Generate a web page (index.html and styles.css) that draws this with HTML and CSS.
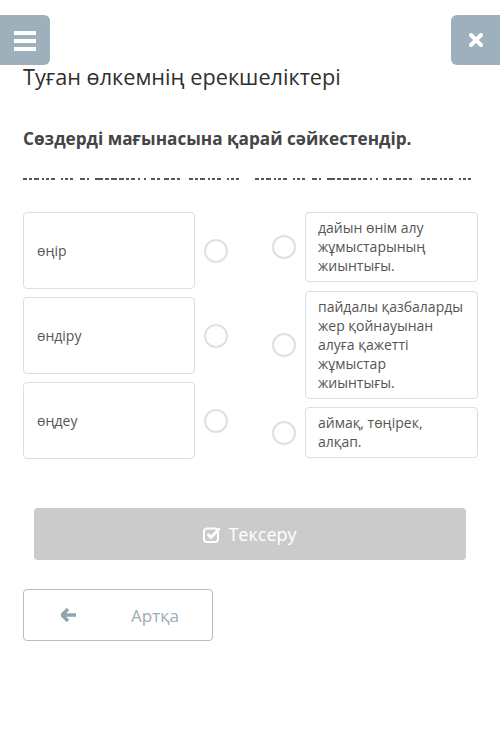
FILE: index.html
```html
<!DOCTYPE html>
<html>

<head>
    <meta charset="UTF-8">
    <title>Туған өлкемнің ерекшеліктері</title>
    <link rel="stylesheet" href="styles.css">
</head>

<body>
    <header class="topbar">
        <button class="tool-btn menu-btn">
            <svg width="22" height="22" viewBox="0 0 22 22">
                <rect x="0" y="2" width="22" height="4" fill="#fff"/>
                <rect x="0" y="10" width="22" height="4" fill="#fff"/>
                <rect x="0" y="18" width="22" height="4" fill="#fff"/>
            </svg>
        </button>
        <button class="tool-btn close-btn">
            <svg width="16" height="16" viewBox="0 0 16 16">
                <path d="M3 3 L13 13 M13 3 L3 13" stroke="#fff" stroke-width="4" stroke-linecap="round"/>
            </svg>
        </button>
    </header>

    <main class="container">
        <h1 class="title">Туған өлкемнің ерекшеліктері</h1>
        <h2 class="task">Сөздерді мағынасына қарай сәйкестендір.</h2>

        <svg class="dots" width="455" height="4" viewBox="0 0 455 4">
            <line x1="0" y1="2" x2="220" y2="2" stroke="#555" stroke-width="2.2"
                stroke-dasharray="4 2 3 2 5 3 2 2 3 2 4 6 2 2 3 2 3 7 5 2 2 6 8 2 4 2 6 2 5 2 3 2 4 3 2 4 2 5 4 2 3 4 5 2 4 2 3 9"/>
            <line x1="232" y1="2" x2="455" y2="2" stroke="#555" stroke-width="2.2"
                stroke-dasharray="4 2 3 2 5 3 2 2 3 2 4 6 2 2 3 2 3 7 5 2 2 6 8 2 4 2 6 2 5 2 3 2 4 3 2 4 2 5 4 2 3 4 5 2 4 2 3 9"/>
        </svg>

        <section class="match">
            <div class="col col-left">
                <div class="pair">
                    <div class="card card-word">өңір</div>
                    <span class="radio"></span>
                </div>
                <div class="pair">
                    <div class="card card-word">өндіру</div>
                    <span class="radio"></span>
                </div>
                <div class="pair">
                    <div class="card card-word">өңдеу</div>
                    <span class="radio"></span>
                </div>
            </div>
            <div class="col col-right">
                <div class="pair">
                    <span class="radio"></span>
                    <div class="card card-def">дайын өнім алу жұмыстарының жиынтығы.</div>
                </div>
                <div class="pair">
                    <span class="radio"></span>
                    <div class="card card-def">пайдалы қазбаларды жер қойнауынан алуға қажетті жұмыстар жиынтығы.</div>
                </div>
                <div class="pair">
                    <span class="radio"></span>
                    <div class="card card-def">аймақ, төңірек, алқап.</div>
                </div>
            </div>
        </section>

        <button class="check-btn">
            <svg class="check-icon" width="18" height="17" viewBox="0 0 18 17">
                <rect x="1" y="2.5" width="14" height="13.5" rx="3" fill="none" stroke="#fff" stroke-width="2"/>
                <path d="M4.5 8 L8 11.5 L16.5 2.5" fill="none" stroke="#fff" stroke-width="2.8"/>
            </svg>
            Тексеру
        </button>

        <button class="back-btn">
            <svg width="16" height="14" viewBox="0 0 16 14">
                <path d="M7 1 L1 7 L7 13 M1.5 7 L15 7" fill="none" stroke="#8fa5b1" stroke-width="3.4" stroke-linejoin="round"/>
            </svg>
            <span>Артқа</span>
        </button>
    </main>
</body>

</html>
```

FILE: styles.css
```css
body {
    margin: 0;
    background-color: #fff;
    font-family: "Open Sans", "Noto Sans", sans-serif;
    color: #333;
}

.topbar {
    display: flex;
    justify-content: space-between;
    padding-top: 15px;
}

.tool-btn {
    width: 50px;
    height: 50px;
    border: none;
    background-color: #9db0bb;
    display: flex;
    align-items: center;
    justify-content: center;
    padding: 0;
}

.menu-btn {
    border-radius: 0 6px 6px 0;
}

.close-btn {
    width: 49px;
    border-radius: 6px 0 0 6px;
}

.container {
    padding: 0 22px 0 23px;
}

.title {
    margin: 0;
    font-size: 21.7px;
    font-weight: normal;
    line-height: 24px;
    color: #2f2f2f;
}

.task {
    margin: 38px 0 0;
    font-size: 17.2px;
    font-weight: bold;
    line-height: 24px;
    color: #454545;
}

.dots {
    display: block;
    margin-top: 26px;
}

.match {
    display: flex;
    justify-content: space-between;
    margin-top: 31px;
}

.col {
    display: flex;
    flex-direction: column;
    gap: 8px;
}

.col-right {
    gap: 8.5px;
}

.pair {
    display: flex;
    align-items: center;
}

.card {
    border: 1px solid #dedede;
    border-radius: 4px;
    font-size: 14px;
    line-height: 19px;
    color: #555;
    box-sizing: border-box;
}

.card-word {
    width: 172px;
    height: 77px;
    padding: 0 13px;
    display: flex;
    align-items: center;
}

.card-def {
    width: 173px;
    padding: 5px 12px 6px;
    margin-left: 9px;
}

.radio {
    width: 24px;
    height: 24px;
    box-sizing: border-box;
    border: 2px solid #e0e0e0;
    border-radius: 50%;
}

.col-left .radio {
    margin-left: 9px;
}

.check-btn {
    display: flex;
    align-items: center;
    justify-content: center;
    gap: 7px;
    width: 432px;
    height: 52px;
    margin: 49px 0 0 11px;
    border: none;
    border-radius: 4px;
    background-color: #cbcbcb;
    color: #fff;
    font-family: inherit;
    font-size: 18px;
}

.check-icon {
    flex-shrink: 0;
    width: 18px;
    height: 17px;
}

.back-btn {
    display: flex;
    align-items: center;
    width: 190px;
    height: 52px;
    margin-top: 29px;
    padding: 0 0 0 37px;
    border: 1px solid #b0c0c8;
    border-radius: 4px;
    background-color: #fff;
    color: #9aabb5;
    font-family: inherit;
    font-size: 17px;
}

.back-btn span {
    margin-left: 54px;
}
```
